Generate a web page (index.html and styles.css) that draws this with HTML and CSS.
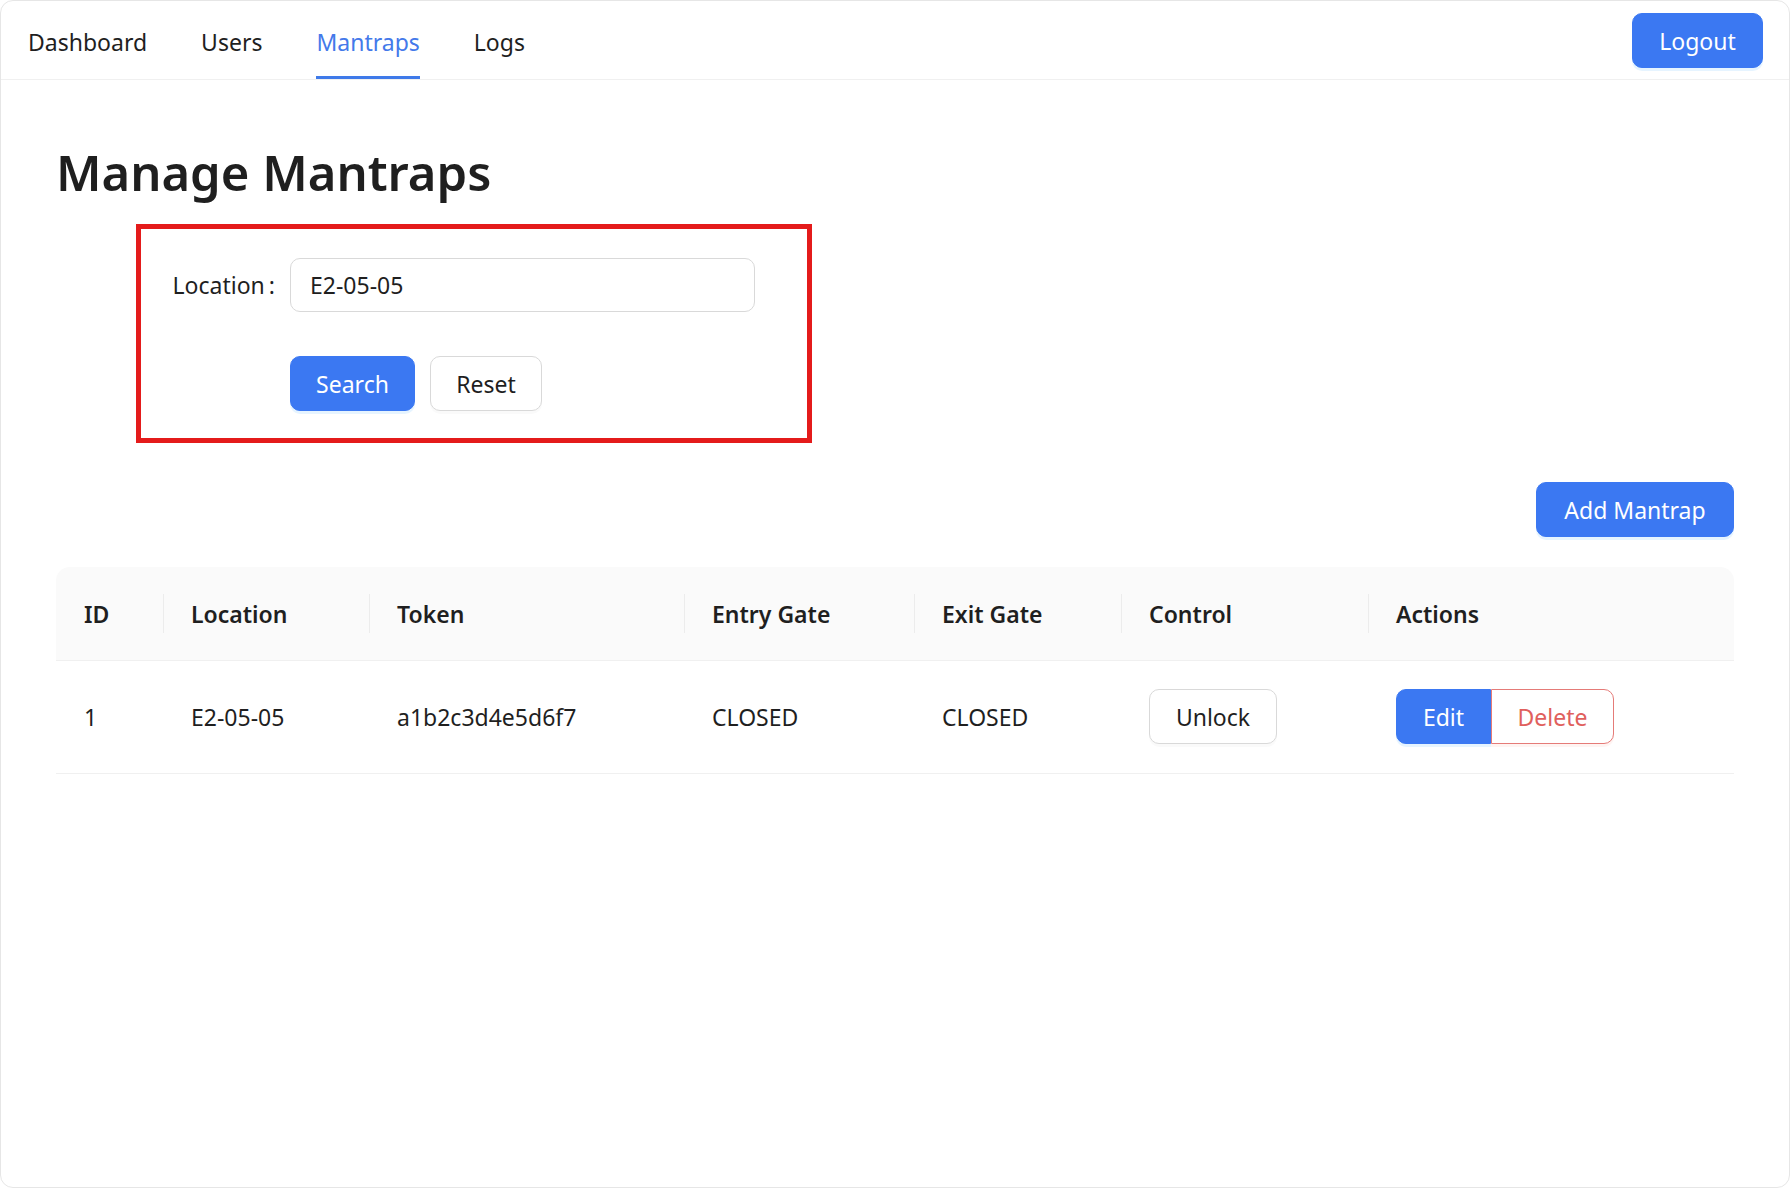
FILE: index.html
```html
<!DOCTYPE html>
<html lang="en">
<head>
<meta charset="utf-8">
<title>Manage Mantraps</title>
<link rel="stylesheet" href="styles.css">
</head>
<body>
<div class="window">
  <header class="topbar">
    <nav class="menu">
      <a class="menu-item">Dashboard</a>
      <a class="menu-item">Users</a>
      <a class="menu-item is-active">Mantraps</a>
      <a class="menu-item">Logs</a>
    </nav>
    <button type="button" class="btn btn-primary btn-logout">Logout</button>
  </header>

  <main class="content">
    <h1 class="page-title">Manage Mantraps</h1>

    <form class="search-form">
      <label class="form-label" for="loc">Location<span class="colon">:</span></label>
      <input id="loc" class="text-input" type="text" value="E2-05-05">
      <div class="form-actions">
        <button type="button" class="btn btn-primary btn-search">Search</button>
        <button type="button" class="btn btn-default btn-reset">Reset</button>
      </div>
    </form>

    <div class="toolbar">
      <button type="button" class="btn btn-primary btn-add">Add Mantrap</button>
    </div>

    <table class="data-table">
      <colgroup>
        <col class="c-id">
        <col class="c-loc">
        <col class="c-token">
        <col class="c-entry">
        <col class="c-exit">
        <col class="c-control">
        <col class="c-actions">
      </colgroup>
      <thead>
        <tr>
          <th>ID</th>
          <th class="sep">Location</th>
          <th class="sep">Token</th>
          <th class="sep">Entry Gate</th>
          <th class="sep">Exit Gate</th>
          <th class="sep">Control</th>
          <th class="sep">Actions</th>
        </tr>
      </thead>
      <tbody>
        <tr>
          <td>1</td>
          <td>E2-05-05</td>
          <td>a1b2c3d4e5d6f7</td>
          <td>CLOSED</td>
          <td>CLOSED</td>
          <td><button type="button" class="btn btn-default btn-unlock">Unlock</button></td>
          <td>
            <div class="btn-group">
              <button type="button" class="btn btn-primary btn-edit">Edit</button>
              <button type="button" class="btn btn-danger btn-delete">Delete</button>
            </div>
          </td>
        </tr>
      </tbody>
    </table>
  </main>
</div>
</body>
</html>
```

FILE: styles.css
```css
* {
  box-sizing: border-box;
}

html, body {
  margin: 0;
  padding: 0;
  background: #ffffff;
}

body {
  font-family: "Noto Sans", "Open Sans", "Liberation Sans", sans-serif;
  font-size: 23px;
  line-height: 36px;
  color: #1f1f1f;
}

.window {
  width: 1790px;
  height: 1188px;
  border: 1px solid #e6e6e6;
  border-radius: 13px;
  overflow: hidden;
  background: #ffffff;
}

/* ---------- top bar ---------- */
.topbar {
  height: 79px;
  border-bottom: 1px solid #f0f0f0;
  display: flex;
  align-items: stretch;
  justify-content: space-between;
  padding-right: 26px;
}

.menu {
  display: flex;
  align-items: stretch;
}

.menu-item {
  display: flex;
  align-items: center;
  padding: 4px 27px 0 27px;
  color: #1f1f1f;
  cursor: pointer;
  text-decoration: none;
}

.menu-item:first-child {
  padding-left: 27px;
}

.menu-item.is-active {
  color: #4479ea;
  background-image: linear-gradient(#3f7ae9, #3f7ae9);
  background-repeat: no-repeat;
  background-size: calc(100% - 54px) 3px;
  background-position: center bottom;
}

/* ---------- buttons ---------- */
.btn {
  font-family: inherit;
  font-size: 23px;
  line-height: 36px;
  height: 55px;
  padding: 0 25px;
  border-radius: 10px;
  border: 1px solid transparent;
  cursor: pointer;
  white-space: nowrap;
}

.btn-primary {
  background: #3b78f2;
  border-color: #3b78f2;
  color: #ffffff;
  box-shadow: 0 3px 0 rgba(5, 145, 255, 0.1);
}

.btn-default {
  background: #ffffff;
  border-color: #d9d9d9;
  color: #1f1f1f;
  box-shadow: 0 3px 0 rgba(0, 0, 0, 0.02);
}

.btn-danger {
  background: #ffffff;
  border-color: #e57b78;
  color: #e0605d;
  box-shadow: 0 3px 0 rgba(255, 38, 5, 0.05);
}

.btn-logout {
  align-self: center;
  width: 131px;
  margin-top: 1px;
}

/* ---------- content ---------- */
.content {
  padding: 62px 55px 0 55px;
}

.page-title {
  margin: 0;
  font-size: 49px;
  line-height: 60px;
  font-weight: 600;
  color: #1f1f1f;
}

/* ---------- search form ---------- */
.search-form {
  margin: 22px 0 0 80px;
  width: 676px;
  height: 219px;
  border: 5px solid #e41b1b;
  padding: 29px 52px 0 0;
  display: grid;
  grid-template-columns: 149px 465px;
  grid-template-rows: 54px 55px;
  row-gap: 44px;
}

.form-label {
  display: flex;
  align-items: center;
  justify-content: flex-end;
  padding-right: 15px;
  color: #1f1f1f;
}

.colon {
  margin-left: 4px;
}

.text-input {
  width: 465px;
  height: 54px;
  border: 1px solid #d9d9d9;
  border-radius: 10px;
  padding: 0 19px;
  font-family: inherit;
  font-size: 23px;
  color: #1f1f1f;
  outline: none;
  background: #ffffff;
}

.form-actions {
  grid-column: 2;
  display: flex;
  gap: 15px;
}

.btn-search {
  width: 125px;
}

.btn-reset {
  width: 112px;
}

/* ---------- toolbar ---------- */
.toolbar {
  display: flex;
  justify-content: flex-end;
  margin-top: 39px;
}

.btn-add {
  width: 198px;
}

/* ---------- table ---------- */
.data-table {
  margin-top: 30px;
  width: 1678px;
  border-collapse: separate;
  border-spacing: 0;
  table-layout: fixed;
}

.c-id { width: 107px; }
.c-loc { width: 206px; }
.c-token { width: 315px; }
.c-entry { width: 230px; }
.c-exit { width: 207px; }
.c-control { width: 247px; }
.c-actions { width: 366px; }

.data-table th {
  background-color: #fafafa;
  font-weight: 600;
  text-align: left;
  padding: 29px 28px 28px 28px;
  border-bottom: 1px solid #f0f0f0;
  color: #1f1f1f;
}

.data-table th.sep {
  background-image: linear-gradient(#ececec, #ececec);
  background-repeat: no-repeat;
  background-size: 1px 39px;
  background-position: left center;
}

.data-table th:first-child {
  border-top-left-radius: 14px;
}

.data-table th:last-child {
  border-top-right-radius: 14px;
}

.data-table td {
  padding: 28px 28px 29px 28px;
  border-bottom: 1px solid #f0f0f0;
  vertical-align: middle;
  white-space: nowrap;
}

.btn-unlock {
  width: 128px;
}

.btn-group {
  display: flex;
}

.btn-edit {
  width: 95px;
  border-radius: 10px 0 0 10px;
}

.btn-delete {
  width: 123px;
  border-radius: 0 10px 10px 0;
  border-left-color: #e57b78;
}
```
